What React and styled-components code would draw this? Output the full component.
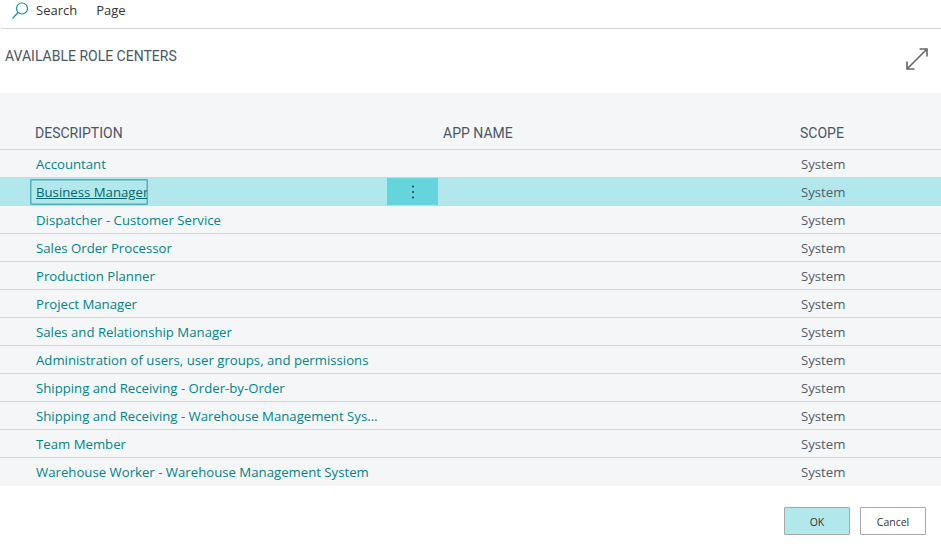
import React from 'react';
import styled, { createGlobalStyle } from 'styled-components';

const GlobalStyle = createGlobalStyle`
  html, body {
    margin: 0;
    padding: 0;
    background: #ffffff;
  }
  body {
    font-family: "Open Sans", "Liberation Sans", sans-serif;
  }
`;

const Page = styled.div`
  width: 941px;
  height: 548px;
  display: flex;
  flex-direction: column;
  overflow: hidden;
`;

const ActionBar = styled.div`
  height: 22px;
  margin-left: 1px;
  display: flex;
  align-items: center;
  border-bottom: 1px solid #d4d4d4;
  padding-left: 11px;
  padding-bottom: 6px;
  box-sizing: content-box;
`;

const ActionItem = styled.span`
  font-size: 13px;
  line-height: 20px;
  margin-bottom: 2px;
  color: #333333;
  margin-left: ${(p) => p.$gap}px;
`;

const TitleRow = styled.div`
  height: 64px;
  display: flex;
  justify-content: space-between;
  padding: 18px 13px 0 5px;
  box-sizing: border-box;
`;

const Title = styled.h1`
  margin: 0;
  font-family: Roboto, "Liberation Sans", sans-serif;
  font-size: 14px;
  font-weight: 400;
  line-height: 19px;
  color: #4a5666;
`;

const ExpandIcon = styled.svg`
  margin-top: 1px;
  width: 22px;
  height: 22px;
`;

const Panel = styled.div`
  height: 393px;
  background: #f4f6f8;
  padding-top: 28px;
  box-sizing: border-box;
`;

const HeaderRow = styled.div`
  height: 29px;
  display: grid;
  grid-template-columns: 443px 357px 1fr;
  align-items: center;
  border-bottom: 1px solid #d4d4d4;
  padding-bottom: 5px;
  box-sizing: border-box;
`;

const HeaderCell = styled.div`
  font-family: Roboto, "Liberation Sans", sans-serif;
  font-size: 14px;
  color: #4a5666;
  padding-left: ${(p) => p.$indent || 0}px;
`;

const Row = styled.div`
  height: 28px;
  display: grid;
  grid-template-columns: 30px 357px 51px 362px 1fr;
  grid-template-rows: 27px;
  align-items: stretch;
  box-sizing: border-box;
  border-bottom: ${(p) => (p.$last ? 'none' : '1px solid #d4d4d4')};
  background: ${(p) => (p.$selected ? '#b2e8ec' : 'transparent')};
  font-size: 13.2px;
  line-height: 29px;
`;

const NameCell = styled.div`
  grid-column: 1 / span 2;
  padding-left: 36px;
  padding-right: 6px;
  color: #00858a;
  white-space: nowrap;
  overflow: hidden;
  text-overflow: ellipsis;
`;

const SelectedName = styled.div`
  grid-column: 1 / span 2;
  position: relative;
`;

const FocusedName = styled.a`
  position: absolute;
  left: 30px;
  top: 1px;
  height: 26px;
  width: 118px;
  box-sizing: border-box;
  border: 1px solid #4fb0b7;
  box-shadow: inset 0 0 0 0.5px #4fb0b7;
  border-radius: 1px;
  padding-left: 5px;
  color: #00696e;
  text-decoration: underline;
  line-height: 24px;
  white-space: nowrap;
  overflow: hidden;
`;

const MenuCell = styled.div`
  grid-column: 3;
  display: flex;
  align-items: center;
  justify-content: center;
  background: ${(p) => (p.$selected ? '#64d5dd' : 'transparent')};
`;

const Dots = styled.svg`
  width: 4px;
  height: 16px;
`;

const ScopeCell = styled.div`
  grid-column: 5;
  padding-left: 1px;
  color: #505c6d;
`;

const Footer = styled.div`
  flex: 1;
  display: flex;
  justify-content: flex-end;
  gap: 10px;
  padding: 21px 15px 0 0;
`;

const DialogButton = styled.button`
  width: 66px;
  height: 28px;
  padding: 2px 0 0;
  font-family: inherit;
  font-size: 10.5px;
  color: #333333;
  border: 1px solid #a8a8a8;
  border-radius: 1px;
  background: ${(p) => (p.$primary ? '#b2e8ec' : '#ffffff')};
`;

const roles = [
  'Accountant',
  'Business Manager',
  'Dispatcher - Customer Service',
  'Sales Order Processor',
  'Production Planner',
  'Project Manager',
  'Sales and Relationship Manager',
  'Administration of users, user groups, and permissions',
  'Shipping and Receiving - Order-by-Order',
  'Shipping and Receiving - Warehouse Management System',
  'Team Member',
  'Warehouse Worker - Warehouse Management System',
];

function App() {
  return (
    <>
      <GlobalStyle />
      <Page>
        <ActionBar>
          <svg width="18" height="18" viewBox="0 0 18 18" fill="none" stroke="#1c8f96" strokeWidth="1.2">
            <circle cx="10" cy="6.5" r="5.5" />
            <path d="M6 10.5 L0.5 16.5" />
          </svg>
          <ActionItem $gap={6}>Search</ActionItem>
          <ActionItem $gap={19}>Page</ActionItem>
        </ActionBar>
        <TitleRow>
          <Title>AVAILABLE ROLE CENTERS</Title>
          <ExpandIcon viewBox="0 0 22 22" fill="none" stroke="#666666" strokeWidth="1.6">
            <path d="M1 21 L21 1 M13.5 1 H21 V8.5 M1 13.5 V21 H8.5" />
          </ExpandIcon>
        </TitleRow>
        <Panel>
          <HeaderRow>
            <HeaderCell $indent={35}>DESCRIPTION</HeaderCell>
            <HeaderCell>APP NAME</HeaderCell>
            <HeaderCell>SCOPE</HeaderCell>
          </HeaderRow>
          {roles.map((role, i) => {
            const selected = role === 'Business Manager';
            return (
              <Row key={role} $selected={selected} $last={i === roles.length - 1}>
                {selected ? (
                  <SelectedName>
                    <FocusedName>{role}</FocusedName>
                  </SelectedName>
                ) : (
                  <NameCell>{role}</NameCell>
                )}
                <MenuCell $selected={selected}>
                  {selected && (
                    <Dots viewBox="0 0 4 16" fill="#2f3b45">
                      <circle cx="2" cy="2.5" r="1" />
                      <circle cx="2" cy="8" r="1" />
                      <circle cx="2" cy="13.5" r="1" />
                    </Dots>
                  )}
                </MenuCell>
                <ScopeCell>System</ScopeCell>
              </Row>
            );
          })}
        </Panel>
        <Footer>
          <DialogButton $primary>OK</DialogButton>
          <DialogButton>Cancel</DialogButton>
        </Footer>
      </Page>
    </>
  );
}

export default App;
